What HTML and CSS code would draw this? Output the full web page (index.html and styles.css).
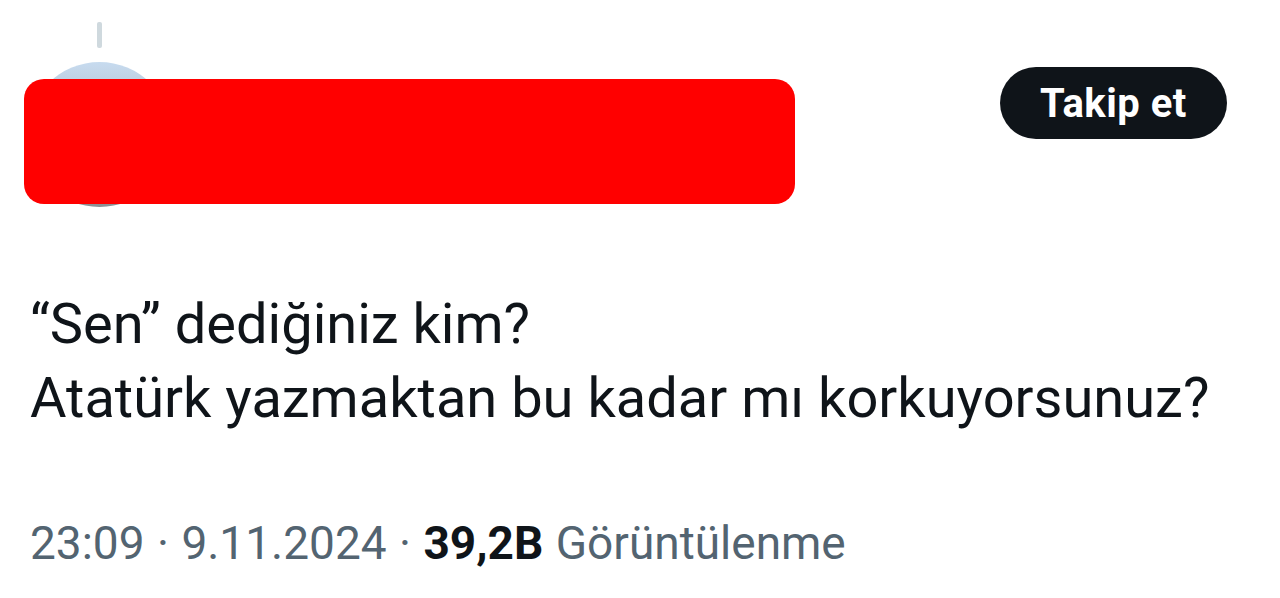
FILE: index.html
```html
<!DOCTYPE html>
<html lang="tr">
<head>
  <meta charset="UTF-8" />
  <title>Gönderi</title>
  <link rel="stylesheet" href="styles.css">
</head>
<body>

<div id="tweet">
  <div class="head">
    <div class="who">
      <div class="avatar-col">
        <div class="thread"></div>
        <div class="avatar"></div>
      </div>
      <div class="names">
        <div class="name">Kullanıcı Adı</div>
        <div class="handle">@kullanici</div>
      </div>
      <div class="redact"></div>
    </div>
    <button class="follow">Takip et</button>
  </div>

  <div class="text">
    “Sen” dediğiniz kim?<br>
    Atatürk yazmaktan bu kadar mı korkuyorsunuz?
  </div>

  <div class="meta">
    23:09 · 9.11.2024 · <b>39,2B</b> Görüntülenme
  </div>
</div>

</body>
</html>
```

FILE: styles.css
```css
body {
  margin: 0;
  background: #fff;
  font-family: Roboto, "Liberation Sans", sans-serif;
  color: #0f1419;
}
#tweet {
  padding: 0 53px 0 30px;
}
.head {
  display: flex;
  justify-content: space-between;
  align-items: flex-start;
}
.who {
  position: relative;
  display: flex;
  align-items: flex-start;
  gap: 20px;
}
.avatar-col {
  display: flex;
  flex-direction: column;
  align-items: center;
  width: 145px;
  margin-left: -3px;
}
.thread {
  width: 5px;
  height: 26px;
  margin-top: 22px;
  border-radius: 2px;
  background: #cfd9de;
}
.avatar {
  width: 145px;
  height: 145px;
  margin-top: 14px;
  border-radius: 50%;
  background: linear-gradient(#c7dbef, #8a8f93);
}
.names {
  padding-top: 76px;
  color: #e8e8e8;
  font-size: 28px;
}
.handle {
  display: none;
}
.redact {
  position: absolute;
  left: -6px;
  top: 79px;
  width: 771px;
  height: 125px;
  border-radius: 20px;
  background: #ff0000;
}
.follow {
  margin-top: 67px;
  width: 227px;
  height: 72px;
  border: none;
  border-radius: 36px;
  background: #0f1419;
  color: #fff;
  font-family: inherit;
  font-size: 40px;
  font-weight: bold;
  letter-spacing: 0.5px;
}
.text {
  margin-top: 80px;
  font-size: 56px;
  line-height: 74px;
}
.meta {
  margin-top: 81px;
  font-size: 46px;
  color: #536471;
  word-spacing: 1px;
}
.meta b {
  color: #0f1419;
}
```
